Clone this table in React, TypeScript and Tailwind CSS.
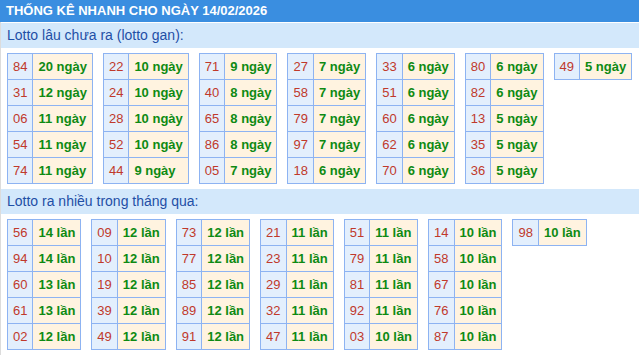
const gan: [string, number][][] = [
  [['84', 20], ['31', 12], ['06', 11], ['54', 11], ['74', 11]],
  [['22', 10], ['24', 10], ['28', 10], ['52', 10], ['44', 9]],
  [['71', 9], ['40', 8], ['65', 8], ['86', 8], ['05', 7]],
  [['27', 7], ['58', 7], ['79', 7], ['97', 7], ['18', 6]],
  [['33', 6], ['51', 6], ['60', 6], ['62', 6], ['70', 6]],
  [['80', 6], ['82', 6], ['13', 5], ['35', 5], ['36', 5]],
  [['49', 5]],
];

const nhieu: [string, number][][] = [
  [['56', 14], ['94', 14], ['60', 13], ['61', 13], ['02', 12]],
  [['09', 12], ['10', 12], ['19', 12], ['39', 12], ['49', 12]],
  [['73', 12], ['77', 12], ['85', 12], ['89', 12], ['91', 12]],
  [['21', 11], ['23', 11], ['29', 11], ['32', 11], ['47', 11]],
  [['51', 11], ['79', 11], ['81', 11], ['92', 11], ['03', 10]],
  [['14', 10], ['58', 10], ['67', 10], ['76', 10], ['87', 10]],
  [['98', 10]],
];

function Group({ rows, unit }: { rows: [string, number][]; unit: string }) {
  return (
    <div className="inline-grid grid-cols-[auto_auto] self-start border-l border-t border-[#8db3f2]">
      {rows.map(([num, count]) => (
        <div key={num} className="contents">
          <div className="h-[26px] flex items-center px-[5px] border-r border-b border-[#8db3f2] bg-[#e3effd] text-[#c0392b]">
            {num}
          </div>
          <div className="h-[26px] flex items-center px-[5px] border-r border-b border-[#8db3f2] bg-[#fff3e0] text-[#0e8a13] font-bold">
            {count} {unit}
          </div>
        </div>
      ))}
    </div>
  );
}

function Section({ title, data, unit }: { title: string; data: [string, number][][]; unit: string }) {
  return (
    <div>
      <div className="h-[25px] flex items-center pl-[6px] bg-[#d3e8fb] text-[#1f4fa6] text-[14px]">{title}</div>
      <div className="flex flex-wrap gap-x-[10px] pl-[6px] pt-[5px] pb-[5px]">
        {data.map((rows, i) => (
          <Group key={i} rows={rows} unit={unit} />
        ))}
      </div>
    </div>
  );
}

export default function App() {
  return (
    <div className="w-full min-h-screen bg-white text-[13px] font-['Liberation_Sans',Arial,sans-serif]">
      <div className="h-[22px] flex items-center pl-[6px] bg-[#3a8ee0] text-white font-bold text-[13px]">
        THỐNG KÊ NHANH CHO NGÀY 14/02/2026
      </div>
      <div className="border-l border-b border-[#dcdcdc] pb-[0px]">
        <div className="pt-[1px]">
          <Section title="Lotto lâu chưa ra (lotto gan):" data={gan} unit="ngày" />
        </div>
        <Section title="Lotto ra nhiều trong tháng qua:" data={nhieu} unit="lần" />
      </div>
    </div>
  );
}
